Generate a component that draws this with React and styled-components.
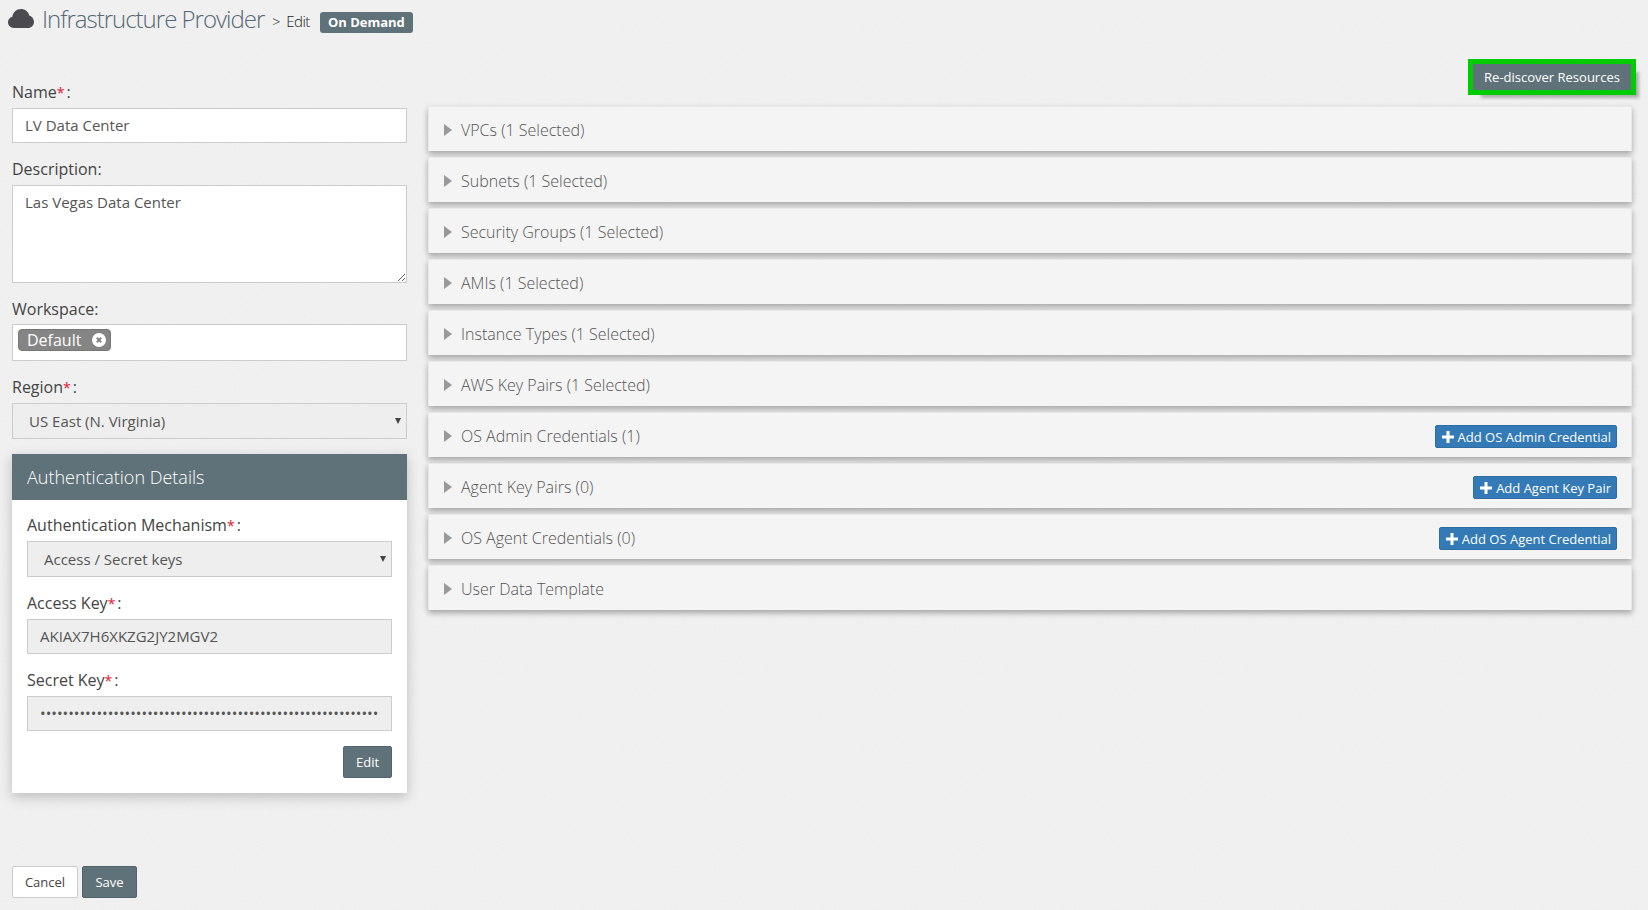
import React from "react"
import styled, { createGlobalStyle } from "styled-components"

const noise = `url("data:image/svg+xml,%3Csvg xmlns='http://www.w3.org/2000/svg' width='240' height='240'%3E%3Cfilter id='n'%3E%3CfeTurbulence type='fractalNoise' baseFrequency='0.9' numOctaves='2' stitchTiles='stitch'/%3E%3CfeColorMatrix values='0 0 0 0 0 0 0 0 0 0 0 0 0 0 0 0 0 0 0.5 -0.2'/%3E%3C/filter%3E%3Crect width='240' height='240' filter='url(%23n)' opacity='0.05'/%3E%3C/svg%3E")`

const GlobalStyle = createGlobalStyle`
  html, body {
    margin: 0;
    padding: 0;
    background: #f1f1f1 ${noise};
  }
  body {
    font-family: "Open Sans", "Liberation Sans", sans-serif;
    color: #444;
  }
  * {
    box-sizing: border-box;
  }
`

const sections = [
  { title: "VPCs (1 Selected)" },
  { title: "Subnets (1 Selected)" },
  { title: "Security Groups (1 Selected)" },
  { title: "AMIs (1 Selected)" },
  { title: "Instance Types (1 Selected)" },
  { title: "AWS Key Pairs (1 Selected)" },
  { title: "OS Admin Credentials (1)", action: "Add OS Admin Credential" },
  { title: "Agent Key Pairs (0)", action: "Add Agent Key Pair" },
  { title: "OS Agent Credentials (0)", action: "Add OS Agent Credential" },
  { title: "User Data Template" },
]

const Label = ({ children, required }) => (
  <FieldLabel>
    {children}
    {required && <Star>*</Star>}
    {required && <Colon>:</Colon>}
    {!required && ":"}
  </FieldLabel>
)

const Dropdown = ({ value }) => (
  <SelectWrap>
    <Select defaultValue={value}>
      <option>{value}</option>
    </Select>
  </SelectWrap>
)

const App = () => {
  return (
    <Page>
      <GlobalStyle />
      <Header>
        <CloudIcon viewBox="0 0 26 19">
          <path d="M6 19C2.700 19 0 16.500 0 13.300C0 10.600 1.800 8.400 4.300 7.800C4.800 3.400 8.500 0 13 0C16.600 0 19.700 2.200 21 5.400C21 5.700 20.900 6 20.900 6.300C23.900 7.100 26 9.800 26 13C26 16.300 23.300 19 20 19Z" />
        </CloudIcon>
        <Title>Infrastructure Provider</Title>
        <Crumb>&gt;</Crumb>
        <CrumbText>Edit</CrumbText>
        <Badge>On Demand</Badge>
      </Header>
      <Main>
        <LeftCol>
          <Field>
            <Label required>Name</Label>
            <TextInput defaultValue="LV Data Center" />
          </Field>
          <Field>
            <Label>Description</Label>
            <TextArea defaultValue="Las Vegas Data Center" />
          </Field>
          <Field>
            <Label>Workspace</Label>
            <TagInput>
              <Tag>
                Default
                <TagClose viewBox="0 0 14 14">
                  <circle cx="7" cy="7" r="7" fill="#fff" />
                  <path d="M4.800 4.800L9.200 9.200M9.200 4.800L4.800 9.200" stroke="#858585" strokeWidth="2" />
                </TagClose>
              </Tag>
            </TagInput>
          </Field>
          <Field>
            <Label required>Region</Label>
            <Dropdown value="US East (N. Virginia)" />
          </Field>
          <Panel>
            <PanelHead>Authentication Details</PanelHead>
            <PanelBody>
              <Field>
                <Label required>Authentication Mechanism</Label>
                <Dropdown value="Access / Secret keys" />
              </Field>
              <Field>
                <Label required>Access Key</Label>
                <ReadOnlyInput readOnly defaultValue="AKIAX7H6XKZG2JY2MGV2" />
              </Field>
              <Field>
                <Label required>Secret Key</Label>
                <ReadOnlyInput readOnly type="password" defaultValue={"x".repeat(60)} />
              </Field>
              <PanelActions>
                <DarkButton>Edit</DarkButton>
              </PanelActions>
            </PanelBody>
          </Panel>
          <Footer>
            <CancelButton>Cancel</CancelButton>
            <SaveButton>Save</SaveButton>
          </Footer>
        </LeftCol>
        <RightCol>
          <TopActions>
            <RediscoverButton>Re-discover Resources</RediscoverButton>
          </TopActions>
          <Rows>
            {sections.map((s) => (
              <Row key={s.title}>
                <Caret />
                <RowTitle>{s.title}</RowTitle>
                {s.action && (
                  <AddButton>
                    <PlusIcon viewBox="0 0 12 12">
                      <path d="M4.500 0H7.500V4.500H12V7.500H7.500V12H4.500V7.500H0V4.500H4.500Z" />
                    </PlusIcon>
                    {s.action}
                  </AddButton>
                )}
              </Row>
            ))}
          </Rows>
        </RightCol>
      </Main>
    </Page>
  )
}

const Page = styled.div`
  width: 1648px;
  height: 910px;
  overflow: hidden;
`
const Header = styled.header`
  height: 64px;
  padding: 6px 0 0 8px;
  display: flex;
  align-items: flex-start;
`
const CloudIcon = styled.svg`
  width: 26px;
  height: 19px;
  margin-top: 3px;
  fill: #4a4a50;
`
const Title = styled.h1`
  margin: -1px 0 0 8px;
  font-size: 24px;
  line-height: 28px;
  font-weight: 300;
  letter-spacing: -1px;
  color: #566874;
`
const Crumb = styled.span`
  margin: 6px 0 0 8px;
  font-size: 14px;
  line-height: 20px;
  font-weight: 300;
  color: #222;
`
const CrumbText = styled.span`
  margin: 5px 0 0 6px;
  font-size: 15px;
  line-height: 20px;
  font-weight: 300;
  letter-spacing: -0.5px;
  color: #222;
`
const Badge = styled.span`
  margin: 6px 0 0 10px;
  height: 21px;
  padding: 0 8px;
  border-radius: 3px;
  background: #5f7279;
  color: #fff;
  font-size: 13px;
  line-height: 21px;
  font-weight: 700;
`
const Main = styled.main`
  display: flex;
  align-items: flex-start;
  gap: 21px;
  padding: 0 16px 0 12px;
`
const LeftCol = styled.div`
  width: 395px;
  flex: none;
  padding-top: 18px;
`
const RightCol = styled.div`
  flex: 1;
  min-width: 0;
`
const Field = styled.div`
  margin-bottom: 16px;
`
const FieldLabel = styled.label`
  display: block;
  height: 20px;
  margin-bottom: 6px;
  font-size: 16px;
  line-height: 20px;
  color: #444;
`
const Star = styled.span`
  color: #e8112d;
  font-size: 14px;
`
const Colon = styled.span`
  margin-left: 2px;
`
const TextInput = styled.input`
  display: block;
  width: 100%;
  height: 35px;
  padding: 0 12px 2px;
  border: 1px solid #ccc;
  border-radius: 0;
  outline: none;
  background: #fff;
  font: 15px "Open Sans", sans-serif;
  color: #555;
`
const TextArea = styled.textarea`
  display: block;
  width: 100%;
  height: 98px;
  padding: 6px 12px;
  border: 1px solid #ccc;
  border-radius: 0;
  outline: none;
  background: #fff;
  font: 15px/20px "Open Sans", sans-serif;
  color: #555;
`
const TagInput = styled.div`
  height: 37px;
  margin-top: -1px;
  padding: 4px 5px;
  border: 1px solid #ccc;
  background: #fff;
`
const Tag = styled.span`
  display: inline-flex;
  align-items: center;
  gap: 11px;
  height: 22px;
  padding: 0 4px 0 8px;
  border: 1px solid #777;
  border-radius: 4px;
  background: #858585;
  color: #fff;
  font-size: 16px;
`
const TagClose = styled.svg`
  width: 14px;
  height: 14px;
`
const SelectWrap = styled.div`
  position: relative;

  &::after {
    content: "";
    position: absolute;
    right: 6px;
    top: 15px;
    border-left: 3px solid transparent;
    border-right: 3px solid transparent;
    border-top: 6px solid #444;
    pointer-events: none;
  }
`
const Select = styled.select`
  display: block;
  width: 100%;
  height: 36px;
  padding: 0 0 0 16px;
  border: 1px solid #ccc;
  border-radius: 0;
  outline: none;
  appearance: none;
  background: #eee;
  font: 15px "Open Sans", sans-serif;
  color: #555;
`
const ReadOnlyInput = styled(TextInput)`
  background: #eee;
`
const Panel = styled.section`
  margin-top: -1px;
  background: #fff;
  box-shadow: 0 4px 12px rgba(0, 0, 0, 0.22);
`
const PanelHead = styled.div`
  height: 46px;
  padding-left: 15px;
  background: #5f7279;
  color: #fff;
  font-size: 18px;
  line-height: 46px;
  font-weight: 300;
`
const PanelBody = styled.div`
  padding: 15px;
`
const PanelActions = styled.div`
  display: flex;
  justify-content: flex-end;
  margin-top: -1px;
`
const DarkButton = styled.button`
  width: 49px;
  height: 32px;
  padding: 0;
  border: 1px solid #52646b;
  border-radius: 2px;
  background: #5f7279;
  color: #fff;
  font: 13px "Open Sans", sans-serif;
`
const Footer = styled.div`
  display: flex;
  gap: 4px;
  margin-top: 73px;
`
const CancelButton = styled.button`
  height: 32px;
  width: 66px;
  padding: 0;
  border: 1px solid #ccc;
  border-radius: 2px;
  background: #fff;
  color: #444;
  font: 13px "Open Sans", sans-serif;
`
const SaveButton = styled(DarkButton)`
  width: 55px;
`
const TopActions = styled.div`
  display: flex;
  justify-content: flex-end;
  height: 42px;
`
const RediscoverButton = styled.button`
  width: 158px;
  height: 26px;
  margin-right: 1px;
  padding: 0;
  border: none;
  outline: 5px solid #00cc00;
  box-shadow: 8px 8px 3px rgba(0, 0, 0, 0.28);
  background: #5f7279;
  color: #fff;
  font: 13px "Open Sans", sans-serif;
`
const Rows = styled.div`
  display: flex;
  flex-direction: column;
  gap: 6px;
`
const Row = styled.div`
  display: flex;
  align-items: center;
  height: 45px;
  padding: 2px 14px 0 15px;
  background: #f4f4f4;
  border: 1px solid #e8e8e8;
  border-bottom: none;
  box-shadow: 0 3px 6px rgba(0, 0, 0, 0.32);
  color: #555;
`
const Caret = styled.span`
  width: 0;
  height: 0;
  border-top: 6px solid transparent;
  border-bottom: 6px solid transparent;
  border-left: 8px solid #999;
`
const RowTitle = styled.span`
  flex: 1;
  margin-left: 9px;
  font-size: 16px;
  font-weight: 300;
`
const AddButton = styled.button`
  display: inline-flex;
  align-items: center;
  gap: 4px;
  height: 23px;
  margin-top: 1px;
  padding: 0 5px 0 6px;
  border: 1px solid #2e6da4;
  border-radius: 2px;
  background: #337ab7;
  color: #fff;
  font: 13px "Open Sans", sans-serif;
`
const PlusIcon = styled.svg`
  width: 12px;
  height: 12px;
  fill: #fff;
`

export default App
